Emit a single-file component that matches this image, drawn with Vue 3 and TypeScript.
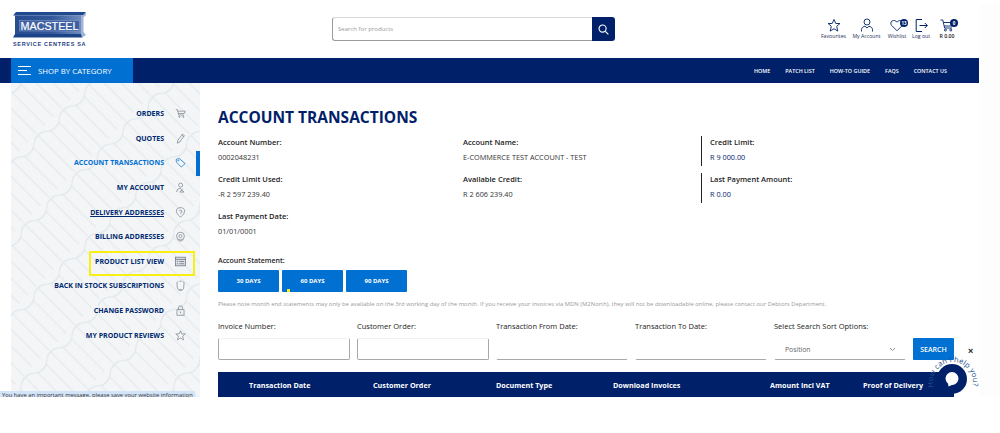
<script setup lang="ts">
interface Side { label: string; icon: string; cls?: string }
const side: Side[] = [
  { label: 'ORDERS', icon: 'cart' },
  { label: 'QUOTES', icon: 'pen' },
  { label: 'ACCOUNT TRANSACTIONS', icon: 'tag', cls: 'active' },
  { label: 'MY ACCOUNT', icon: 'user' },
  { label: 'DELIVERY ADDRESSES', icon: 'pin', cls: 'under' },
  { label: 'BILLING ADDRESSES', icon: 'target' },
  { label: 'PRODUCT LIST VIEW', icon: 'list', cls: 'boxed' },
  { label: 'BACK IN STOCK SUBSCRIPTIONS', icon: 'bell' },
  { label: 'CHANGE PASSWORD', icon: 'lock' },
  { label: 'MY PRODUCT REVIEWS', icon: 'star' },
]
const info = [
  [{ l: 'Account Number:', v: '0002048231' }, { l: 'Account Name:', v: 'E-COMMERCE TEST ACCOUNT - TEST' }, { l: 'Credit Limit:', v: 'R 9 000.00', bar: true }],
  [{ l: 'Credit Limit Used:', v: '-R 2 597 239.40' }, { l: 'Available Credit:', v: 'R 2 606 239.40' }, { l: 'Last Payment Amount:', v: 'R 0.00', bar: true }],
  [{ l: 'Last Payment Date:', v: '01/01/0001' }],
]
const nav = ['HOME', 'PATCH LIST', 'HOW-TO GUIDE', 'FAQS', 'CONTACT US']
const filters = ['Invoice Number:', 'Customer Order:', 'Transaction From Date:', 'Transaction To Date:']
const heads = [
  { t: 'Transaction Date', w: 155, p: 31 },
  { t: 'Customer Order', w: 123, p: 0 },
  { t: 'Document Type', w: 117, p: 0 },
  { t: 'Download Invoices', w: 157, p: 0 },
  { t: 'Amount Incl VAT', w: 93, p: 0 },
]
</script>

<template>
  <div class="page">
    <header class="top">
      <div class="logo">
        <svg width="74" height="26" viewBox="0 0 74 26">
          <defs>
            <linearGradient id="beam" x1="0" y1="0" x2="1" y2="0">
              <stop offset="0" stop-color="#274c90" />
              <stop offset="0.55" stop-color="#34579a" />
              <stop offset="1" stop-color="#6f8cbd" />
            </linearGradient>
          </defs>
          <path d="M3 0H73L70 3.5H0Z" fill="#1f4a8f" />
          <path d="M2 3.5H68V22H2Z" fill="url(#beam)" />
          <path d="M2 22H72L69 25.5H0Z" fill="#1c4488" />
          <path d="M68 3.5H70L73 0.5V3L70.5 5.5V20L73 23L69 25.5L68 22Z" fill="#9fb4d6" />
          <rect x="6.5" y="8.5" width="60" height="10.5" fill="#3f61a2" stroke="#8ea5cc" stroke-width="0.5" />
          <text x="7.5" y="17.8" textLength="58" lengthAdjust="spacingAndGlyphs" class="logo-word">MACSTEEL</text>
        </svg>
        <div class="logo-sub">SERVICE CENTRES SA</div>
      </div>

      <form class="search" @submit.prevent>
        <input class="search-input" placeholder="Search for products" />
        <button class="search-btn" aria-label="Search">
          <svg width="11" height="11" viewBox="0 0 12 12" fill="none" stroke="#fff" stroke-width="1.2">
            <circle cx="5" cy="5" r="3.9" /><path d="M8 8L11.3 11.3" />
          </svg>
        </button>
      </form>

      <div class="tools">
        <div class="tool t1">
          <svg width="14" height="14" viewBox="0 0 14 14" fill="none" stroke="#002169" stroke-width="0.9"><path d="M7 1L8.8 5H13L9.7 7.8L10.8 12.6L7 10.2L3.2 12.6L4.3 7.8L1 5H5.2Z" /></svg>
          <span>Favourites</span>
        </div>
        <div class="tool t2">
          <svg width="14" height="15" viewBox="0 0 14 15" fill="none" stroke="#002169" stroke-width="0.9"><circle cx="7" cy="4" r="3" /><path d="M1.5 13.5V11.5C1.5 9.5 3.5 8.5 5 8.2L7 10L9 8.2C10.5 8.5 12.5 9.5 12.5 11.5V13.5" /></svg>
          <span>My Account</span>
        </div>
        <div class="tool t3">
          <svg width="14" height="13" viewBox="0 0 14 13" fill="none" stroke="#002169" stroke-width="0.9"><path d="M7 11.8L1.8 6.6C0.4 5.2 0.6 3 2 2C3.6 1 5.8 1.4 7 3.2C8.2 1.4 10.4 1 12 2C13.4 3 13.6 5.2 12.2 6.6Z" /></svg>
          <span>Wishlist</span>
          <b class="badge b3">13</b>
        </div>
        <div class="tool t4">
          <svg width="13" height="14" viewBox="0 0 13 14" fill="none" stroke="#002169" stroke-width="1"><path d="M7 1H1.2V13H7M4.5 7H12.3M9.8 4.5L12.3 7L9.8 9.5" /></svg>
          <span>Log out</span>
        </div>
        <div class="tool t5">
          <svg width="14" height="13" viewBox="0 0 14 13" fill="none" stroke="#002169" stroke-width="0.9"><path d="M0.5 1H2.8L4.6 9H12M3.4 3.5H13L12 7H4.2" /><circle cx="5.4" cy="11" r="1" /><circle cx="10.8" cy="11" r="1" /></svg>
          <span>R 0.00</span>
          <b class="badge b5">0</b>
        </div>
      </div>
    </header>

    <nav class="bar">
      <div class="shop">
        <span class="burger"><i /><i /><i /></span>
        SHOP BY CATEGORY
      </div>
      <ul class="links">
        <li v-for="n in nav" :key="n">{{ n }}</li>
      </ul>
    </nav>

    <div class="body">
      <aside class="side">
        <svg class="pattern" aria-hidden="true">
          <defs>
            <pattern id="wave" width="36" height="54" patternUnits="userSpaceOnUse" patternTransform="rotate(-45)">
              <rect width="36" height="54" fill="#f4f5f6" />
              <path d="M0 9C9 9 9 2 18 2S27 9 36 9" fill="none" stroke="#d6e3e9" stroke-width="1" />
              <path d="M6 7V54M18 2V54M30 7V54" fill="none" stroke="#dce5e9" stroke-width="0.9" />
            </pattern>
          </defs>
          <rect width="100%" height="100%" fill="url(#wave)" />
        </svg>
        <ul class="menu">
          <li v-for="s in side" :key="s.label" class="item" :class="s.cls">
            <span class="txt">{{ s.label }}</span>
            <svg class="ic" width="11" height="11" viewBox="0 0 14 14" fill="none" stroke="#77808c" stroke-width="0.9">
              <template v-if="s.icon === 'cart'"><path d="M1 2H3L4.8 9H11.5M3.6 4H13L11.8 7H4.4" /><circle cx="5.6" cy="11.2" r="0.8" /><circle cx="10.6" cy="11.2" r="0.8" /></template>
              <template v-else-if="s.icon === 'pen'"><path d="M3.5 9.5L9.5 1.5L12 3.4L6 11.4L3 13Z M8.6 2.8L11 4.6" /></template>
              <template v-else-if="s.icon === 'tag'"><path d="M1.5 3L5.5 2L12.8 8.4L8 12.8L1.8 6.5Z" stroke="#0070d2" /><circle cx="4.2" cy="4.6" r="0.6" stroke="#0070d2" /></template>
              <template v-else-if="s.icon === 'user'"><circle cx="7.2" cy="4" r="2.6" /><path d="M2 12.8C2.4 9.5 4.5 8 7 8.4L11.5 12.8H6.5L9.5 8.6" /></template>
              <template v-else-if="s.icon === 'pin'"><path d="M7 13C3.5 9.6 1.8 7.6 1.8 5.4A5.2 4.6 0 0 1 12.2 5.4C12.2 7.6 10.5 9.6 7 13Z" /><path d="M5.5 5.5A1.6 1.6 0 1 1 7.2 7.4V8.5" /></template>
              <template v-else-if="s.icon === 'target'"><circle cx="7" cy="6.5" r="5" /><circle cx="7" cy="6.5" r="2" /><path d="M3.5 11L7 13.2L10.5 11" /></template>
              <template v-else-if="s.icon === 'list'"><rect x="0.5" y="1.5" width="13" height="11" fill="#d8dce2" stroke="#68707c" /><path d="M0.5 4.4H13.5M2.5 7H4M5.5 7H11.5M2.5 9.8H4M5.5 9.8H11.5" stroke="#68707c" /></template>
              <template v-else-if="s.icon === 'bell'"><path d="M4 1.8L2.4 3.2L3 10.5L4.4 12.5H9.6L11 10.5L11.6 3.2L10 1.8M5.5 1.5H8.5M5.5 13.2H8.5" /></template>
              <template v-else-if="s.icon === 'lock'"><rect x="2.5" y="6" width="9" height="7" /><path d="M4.4 6V3.6A2.6 2.6 0 0 1 9.6 3.6V6M7 8.4V10.6" /></template>
              <template v-else><path d="M7 1L8.7 5H13L9.7 7.8L10.8 12.6L7 10.2L3.2 12.6L4.3 7.8L1 5H5.3Z" /></template>
            </svg>
            <span v-if="s.cls === 'active'" class="marker" />
          </li>
        </ul>
      </aside>

      <main class="main">
        <h1>ACCOUNT TRANSACTIONS</h1>
        <section class="info">
          <div v-for="(row, i) in info" :key="i" class="info-row">
            <div v-for="c in row" :key="c.l" class="cell" :class="{ bar2: c.bar }">
              <div class="lab">{{ c.l }}</div>
              <div class="val">{{ c.v }}</div>
            </div>
          </div>
        </section>

        <div class="stmt">Account Statement:</div>
        <div class="days">
          <button class="dbtn">30 DAYS</button>
          <button class="dbtn cursor">60 DAYS</button>
          <button class="dbtn">90 DAYS</button>
        </div>
        <p class="note">Please note month end statements may only be available on the 3rd working day of the month. If you receive your invoices via MDN (M2North), they will not be downloadable online, please contact our Debtors Department.</p>

        <div class="filters">
          <label v-for="f in filters" :key="f" class="field">
            <span>{{ f }}</span>
            <input class="inp" />
          </label>
          <label class="field">
            <span>Select Search Sort Options:</span>
            <div class="inp sel">Position
              <svg width="7" height="5" viewBox="0 0 7 5" fill="none" stroke="#8a8f96"><path d="M1 1L3.5 3.5L6 1" /></svg>
            </div>
          </label>
          <button class="go">SEARCH</button>
        </div>

        <div class="thead">
          <span v-for="h in heads" :key="h.t" class="th" :style="{ width: h.w + 'px', paddingLeft: h.p + 'px' }">{{ h.t }}</span>
          <span class="th">Proof of Delivery</span>
        </div>
      </main>
    </div>

    <div class="cookie">You have an important message, please save your website information</div>

    <div class="chat">
      <span class="x">×</span>
      <svg width="60" height="56" viewBox="0 0 60 56">
        <path id="chatArc" d="M8.6 37A20 20 0 1 1 47.4 37" fill="none" />
        <text class="arc"><textPath href="#chatArc" textLength="71" lengthAdjust="spacing">How can I help you?</textPath></text>
        <circle cx="27" cy="29" r="15" fill="#002169" />
        <circle cx="27" cy="28.5" r="6.5" fill="#fff" />
        <path d="M23 33L23.5 36.5L28 34.5Z" fill="#fff" />
      </svg>
    </div>
  </div>
</template>

<style>
html, body { background: #fff; overflow: hidden; }
</style>

<style scoped>
.page {
  position: relative;
  width: 1000px;
  height: 433px;
  overflow: hidden;
  font-family: "Open Sans", "Noto Sans", sans-serif;
  color: #1a1a1a;
  background: #fff;
}
.page::after {
  content: "";
  position: absolute;
  left: 980px;
  top: 4px;
  width: 20px;
  height: 393px;
  background: #fdfdfd;
}
.top {
  position: relative;
  display: flex;
  align-items: flex-start;
  width: 980px;
  height: 58px;
  box-sizing: border-box;
  padding: 12px 0 0 13px;
  background: #fff;
}
.logo { width: 74px; height: 36px; }
.logo svg { display: block; }
.logo-word { font: 400 11px "Liberation Sans", Arial, sans-serif; fill: #fff; stroke: #fff; stroke-width: 0.2px; }
.logo-sub {
  margin-top: 3px;
  font: 700 5.5px "Liberation Sans", Arial, sans-serif;
  letter-spacing: 0.68px;
  color: #1f3f7f;
  white-space: nowrap;
}
.search {
  display: flex;
  width: 283px;
  height: 24px;
  margin: 5px 0 0 245px;
}
.search-input {
  flex: 1;
  min-width: 0;
  box-sizing: border-box;
  border: 1px solid #9a9a9a;
  border-top-color: #d8d8d8;
  border-right: 0;
  border-radius: 3px 0 0 3px;
  padding: 0 5px;
  font: 400 6px "Open Sans", sans-serif;
  background: #fff;
  outline: none;
}
.search-input::placeholder { color: #9a9a9a; }
.search-btn {
  display: flex;
  align-items: center;
  justify-content: center;
  width: 23px;
  border: 0;
  padding: 0;
  border-radius: 0 3px 3px 0;
  background: #002169;
}
.tools {
  position: relative;
  display: flex;
  margin-left: 202px;
  height: 32px;
  margin-top: 6px;
}
.tool {
  position: relative;
  display: flex;
  flex-direction: column;
  align-items: center;
  justify-content: flex-start;
  font-size: 5.2px;
  line-height: 7px;
  color: #1c2f57;
  white-space: nowrap;
}
.tool svg { height: 15px; }
.t1 { width: 33px; }
.t2 { width: 33px; }
.t3 { width: 26px; margin-left: 1px; }
.t4 { width: 22px; }
.t5 { width: 24px; margin-left: 3px; }
.t5 span { color: #222; font-weight: 600; }
.badge {
  position: absolute;
  display: flex;
  align-items: center;
  justify-content: center;
  width: 8px;
  height: 8px;
  border-radius: 50%;
  background: #002169;
  color: #fff;
  font-size: 4.5px;
  font-weight: 700;
}
.b3 { top: 1px; left: 16px; }
.b5 { top: 1px; left: 15px; }

.bar {
  display: flex;
  align-items: stretch;
  justify-content: space-between;
  width: 979px;
  height: 25px;
  background: #002169;
  box-sizing: border-box;
  padding: 0 32px 0 11px;
}
.shop {
  display: flex;
  align-items: center;
  gap: 7px;
  width: 122px;
  box-sizing: border-box;
  padding-left: 7px;
  background: #0070d2;
  color: #fff;
  font-size: 7.8px;
  white-space: nowrap;
}
.burger { display: flex; flex-direction: column; gap: 3px; width: 13px; }
.burger i { display: block; height: 1px; background: #fff; }
.burger i:first-child { width: 13px; }
.burger i:nth-child(2) { width: 9px; }
.burger i:last-child { width: 13px; }
.links {
  display: flex;
  align-items: center;
  gap: 15px;
  margin: 0;
  padding: 0;
  list-style: none;
  color: #fff;
  font-size: 5.4px;
  font-weight: 600;
}

.body { display: flex; height: 314px; }
.side {
  position: relative;
  width: 189px;
  margin-left: 11px;
  overflow: hidden;
  flex: none;
}
.pattern { position: absolute; inset: 0; width: 100%; height: 100%; }
.menu {
  position: relative;
  margin: 0;
  padding: 18.5px 0 0;
  list-style: none;
}
.item {
  position: relative;
  display: flex;
  align-items: center;
  justify-content: flex-end;
  height: 24.6px;
  padding-right: 14.5px;
  font-size: 7px;
  font-weight: 700;
  color: #00296f;
  white-space: nowrap;
}
.txt { margin-right: 10.5px; }
.ic { flex: none; }
.active { color: #0070d2; }
.under .txt { text-decoration: underline; }
.boxed::before {
  content: "";
  position: absolute;
  left: 78px;
  right: 5px;
  top: 1.5px;
  height: 25px;
  box-sizing: border-box;
  border: 2px solid #f8ef14;
}
.marker {
  position: absolute;
  right: 0;
  top: 0;
  width: 4px;
  height: 25px;
  background: #0070d2;
}
.cookie {
  position: absolute;
  left: 0;
  top: 391px;
  width: 195px;
  height: 6px;
  box-sizing: border-box;
  padding-left: 2px;
  overflow: hidden;
  background: #d3e3f8;
  font-size: 5.8px;
  line-height: 9px;
  color: #333;
  white-space: nowrap;
}

.main { flex: none; width: 736px; margin-left: 18px; overflow: hidden; }
h1 {
  margin: 23px 0 0;
  font-size: 15.5px;
  line-height: 22px;
  font-weight: 700;
  color: #002169;
  white-space: nowrap;
}
.info { margin-top: 8px; }
.info-row { display: flex; height: 37px; }
.cell { width: 245px; line-height: 10px; flex: none; box-sizing: border-box; }
.cell:nth-child(2) { width: 238px; }
.lab { font-size: 7.5px; font-weight: 600; color: #222; padding-top: 1px; }
.val { margin-top: 5px; font-size: 7.3px; color: #333; }
.bar2 { padding-left: 8px; border-left: 1px solid #222; height: 30px; }
.bar2 .val { color: #002169; }
.stmt { margin-top: 9px; font-size: 7px; font-weight: 600; line-height: 10px; color: #222; }
.days { display: flex; gap: 3px; margin-top: 4px; }
.dbtn {
  position: relative;
  width: 61px;
  height: 22px;
  padding: 0;
  border: 0;
  border-radius: 1px;
  background: #0070d2;
  color: #fff;
  font: 700 6px "Open Sans", sans-serif;
}
.cursor::after {
  content: "";
  position: absolute;
  left: 5px;
  bottom: 0;
  width: 3px;
  height: 3px;
  background: #f8ef14;
}
.note {
  margin: 8px 0 0;
  font-size: 5.9px;
  line-height: 9px;
  color: #9a9a9a;
  white-space: nowrap;
}
.filters { display: flex; align-items: flex-start; margin-top: 12px; }
.field { display: flex; flex-direction: column; width: 139px; flex: none; }
.field span { font-size: 7.5px; line-height: 11px; color: #222; height: 17px; }
.inp {
  width: 132px;
  height: 22px;
  box-sizing: border-box;
  border: 1px solid #a8a8a8;
  border-top-color: #fff;
  border-radius: 2px;
  background: #fff;
  outline: none;
}
.field:first-child .inp, .field:nth-child(2) .inp { border-top-color: #f0f0f0; }
.field:nth-child(3) .inp, .field:nth-child(4) .inp { border-left-color: #fff; border-right-color: #fff; }
.sel {
  display: flex;
  align-items: center;
  justify-content: space-between;
  padding: 0 9px 0 10px;
  font-size: 6.8px;
  color: #666;
  border-left-color: #fff;
  border-right-color: #fff;
}
.go {
  width: 41px;
  height: 22px;
  margin-top: 17px;
  border: 0;
  padding: 0;
  border-radius: 1px;
  background: #0070d2;
  color: #fff;
  font: 600 7px "Open Sans", sans-serif;
}
.thead {
  display: flex;
  align-items: center;
  width: 736px;
  height: 25px;
  margin-top: 12px;
  background: #002169;
}
.th {
  flex: none;
  box-sizing: border-box;
  color: #fff;
  font-size: 7.2px;
  font-weight: 700;
  white-space: nowrap;
}
.chat {
  position: absolute;
  left: 925px;
  top: 350px;
  width: 60px;
  height: 56px;
  z-index: 2;
}
.chat svg { display: block; overflow: visible; }
.arc { font-size: 7.5px; fill: #23508f; }
.x {
  position: absolute;
  left: 43px;
  top: -4px;
  font: 700 9px "Liberation Sans", sans-serif;
  color: #222;
}
</style>
